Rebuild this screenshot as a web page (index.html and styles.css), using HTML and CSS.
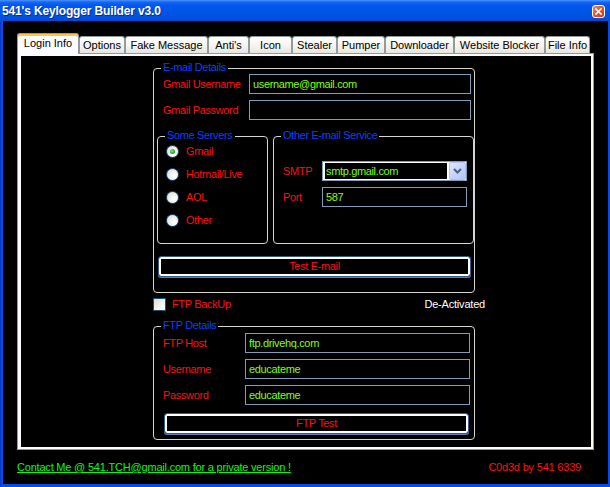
FILE: index.html
```html
<!DOCTYPE html>
<html lang="en">
<head>
<meta charset="utf-8">
<title>541's Keylogger Builder v3.0</title>
<link rel="stylesheet" href="styles.css">
</head>
<body>
<div class="window">
  <header class="titlebar">
    <span class="title">541's Keylogger Builder v3.0</span>
    <span class="close" aria-label="Close">
      <svg width="11" height="11" viewBox="0 0 11 11"><path d="M3 3 L8 8 M8 3 L3 8" stroke="#fff" stroke-width="1.7" stroke-linecap="square"/></svg>
    </span>
  </header>
  <main class="client">
    <nav class="tabs">
      <span class="tab active w-login">Login Info</span>
      <span class="tab w-options">Options</span>
      <span class="tab w-fake">Fake Message</span>
      <span class="tab w-antis">Anti's</span>
      <span class="tab w-icon">Icon</span>
      <span class="tab w-stealer">Stealer</span>
      <span class="tab w-pumper">Pumper</span>
      <span class="tab w-down">Downloader</span>
      <span class="tab w-web">Website Blocker</span>
      <span class="tab w-file">File Info</span>
    </nav>
    <section class="page">
      <div class="page-inner">
        <div class="form">
          <div class="group email">
            <span class="legend">E-mail Details</span>
            <div class="field"><span class="label lbl-email">Gmail Username</span><span class="input wide">username@gmail.com</span></div>
            <div class="field"><span class="label lbl-email">Gmail Password</span><span class="input wide"></span></div>
            <div class="subgroups">
              <div class="group servers">
                <span class="legend">Some Servers</span>
                <div class="radio-row"><span class="radio checked"></span><span class="label">Gmail</span></div>
                <div class="radio-row"><span class="radio"></span><span class="label">Hotmail/Live</span></div>
                <div class="radio-row"><span class="radio"></span><span class="label">AOL</span></div>
                <div class="radio-row"><span class="radio"></span><span class="label">Other</span></div>
              </div>
              <div class="group other">
                <span class="legend">Other E-mail Service</span>
                <div class="field"><span class="label lbl-other">SMTP</span>
                  <span class="combo"><span class="combo-text">smtp.gmail.com</span><span class="combo-btn"><svg width="9" height="6" viewBox="0 0 9 6"><path d="M1 1 L4.5 4.5 L8 1" fill="none" stroke="#4d6185" stroke-width="2"/></svg></span></span>
                </div>
                <div class="field"><span class="label lbl-other">Port</span><span class="input short">587</span></div>
              </div>
            </div>
            <div class="btn test-email">Test E-mail</div>
          </div>
          <div class="backup">
            <span class="check"></span>
            <span class="label">FTP BackUp</span>
            <span class="status">De-Activated</span>
          </div>
          <div class="group ftp">
            <span class="legend">FTP Details</span>
            <div class="field"><span class="label lbl-ftp">FTP Host</span><span class="input ftp-input">ftp.drivehq.com</span></div>
            <div class="field"><span class="label lbl-ftp">Username</span><span class="input ftp-input">educateme</span></div>
            <div class="field"><span class="label lbl-ftp">Password</span><span class="input ftp-input">educateme</span></div>
            <div class="btn ftp-test">FTP Test</div>
          </div>
        </div>
      </div>
    </section>
    <footer class="footer">
      <a class="contact" href="#">Contact Me @ 541.TCH@gmail.com for a private version !</a>
      <span class="credit">C0d3d by 541 6339</span>
    </footer>
  </main>
</div>
</body>
</html>
```

FILE: styles.css
```css
* { box-sizing: border-box; }
html, body { margin: 0; padding: 0; background: #000; }
body {
  width: 610px;
  height: 487px;
  overflow: hidden;
  font-family: "Liberation Sans", Arial, sans-serif;
  font-size: 11px;
}

.window {
  width: 610px;
  height: 487px;
  display: flex;
  flex-direction: column;
  background: #0a4ae6;
  border-left: 1px solid #0838c8;
}

.titlebar {
  height: 21px;
  flex: none;
  display: flex;
  align-items: center;
  padding: 2px 5px 0 2px;
  margin-left: -1px;
  background: linear-gradient(to bottom, #4a95ff 0px, #1a66f5 2px, #0058ee 5px, #0055e6 12px, #0051df 18px, #0048d4 21px);
}
.title {
  flex: 1;
  color: #fff;
  font-weight: bold;
  font-size: 12px;
  letter-spacing: -0.15px;
  line-height: 19px;
  text-shadow: 1px 1px 0 #0a2a9c;
}
.close {
  width: 13px;
  height: 13px;
  border: 1px solid #fff;
  border-radius: 3px;
  background: linear-gradient(135deg, #f08a68 0%, #e2582f 45%, #c63a17 100%);
  display: flex;
  align-items: center;
  justify-content: center;
}
.close svg { display: block; }

.client {
  flex: 1;
  margin: 0 2px 3px 2px;
  background: #000;
  display: flex;
  flex-direction: column;
  padding: 12px 0 0 14px;
}

/* Tabs */
.tabs {
  display: flex;
  align-items: flex-end;
  height: 20px;
  flex: none;
}
.tab {
  height: 17px;
  border: 1px solid #919b9c;
  border-bottom: none;
  border-radius: 3px 3px 0 0;
  background: linear-gradient(to bottom, #ffffff 0%, #f6f5f1 50%, #e6e5df 100%);
  color: #000;
  font-size: 11px;
  line-height: 13px;
  display: flex;
  align-items: center;
  justify-content: center;
  white-space: nowrap;
}
.tab.active {
  height: 21px;
  margin-bottom: -1px;
  position: relative;
  z-index: 1;
  background: #fcfcfe;
  border-top: 1px solid #e68b2c;
  box-shadow: inset 0 2px 0 #ffc83c;
  padding-bottom: 2px;
}
.w-login { width: 62px; }
.w-options { width: 46px; }
.w-fake { width: 83px; }
.w-antis { width: 41px; }
.w-icon { width: 43px; }
.w-stealer { width: 45px; }
.w-pumper { width: 48px; }
.w-down { width: 69px; }
.w-web { width: 91px; }
.w-file { width: 45px; }

/* Page */
.page {
  width: 577px;
  height: 397px;
  flex: none;
  border: 1px solid #919b9c;
  background: #fcfcfe;
  padding: 2px 2px 2px 3px;
}
.page-inner {
  height: 100%;
  background: #000;
  padding: 12px 0 0 132px;
}
.form {
  width: 322px;
  display: flex;
  flex-direction: column;
  letter-spacing: -0.35px;
}

.group {
  position: relative;
  border: 1px solid #d6d6cc;
  border-radius: 4px;
}
.legend {
  position: absolute;
  top: -8px;
  left: 7px;
  padding: 0 2px;
  background: #000;
  color: #0044ff;
  line-height: 13px;
  white-space: nowrap;
}

.label {
  color: #ff1010;
  line-height: 13px;
  white-space: nowrap;
}

.field {
  display: flex;
  align-items: center;
  height: 20px;
  padding-left: 9px;
}
.field + .field { margin-top: 6px; }

.input {
  height: 20px;
  border: 1px solid #7f9db9;
  background: #000;
  color: #80ff00;
  padding-left: 3px;
  line-height: 18px;
  white-space: nowrap;
}

/* E-mail Details */
.email {
  height: 225px;
  padding-top: 5px;
}
.lbl-email { width: 86px; }
.wide { width: 222px; }

.subgroups {
  display: flex;
  gap: 5px;
  margin: 16px 0 0 3px;
  height: 108px;
}
.servers {
  width: 111px;
  padding: 8px 0 0 8px;
}
.radio-row {
  display: flex;
  align-items: center;
  height: 13px;
}
.radio-row + .radio-row { margin-top: 10px; }
.radio {
  width: 13px;
  height: 13px;
  flex: none;
  border-radius: 50%;
  border: 1px solid #1c5180;
  background: radial-gradient(circle at 65% 65%, #ffffff 0%, #f2f2ee 40%, #d4d4cc 100%);
  margin-right: 7px;
  display: flex;
  align-items: center;
  justify-content: center;
}
.radio.checked::after {
  content: "";
  width: 5px;
  height: 5px;
  border-radius: 50%;
  background: radial-gradient(circle at 40% 40%, #8ee88e 0%, #2fb12f 50%, #1a8c1a 100%);
}

.other {
  width: 201px;
  padding-top: 24px;
}
.lbl-other { width: 39px; }
.short { width: 145px; }

.combo {
  width: 145px;
  height: 20px;
  display: flex;
  border: 1px solid #7f9db9;
  background: #fff;
  padding: 0 0 0 1px;
}
.combo-text {
  flex: 1;
  margin: 1px 2px 1px 1px;
  background: #000;
  color: #80ff00;
  line-height: 16px;
  padding-left: 1px;
  white-space: nowrap;
}
.combo-btn {
  width: 17px;
  height: 18px;
  border: 1px solid #b4c6f0;
  border-radius: 2px;
  background: linear-gradient(135deg, #dfe8fd 0%, #c6d5fb 50%, #b3c6f5 100%);
  display: flex;
  align-items: center;
  justify-content: center;
}
.combo-btn svg { display: block; }

.btn {
  height: 21px;
  border: 1px solid #365a8c;
  border-radius: 3px;
  background: #000;
  box-shadow: inset 0 0 0 2px #ffffff, 0 1px 0 #5a7fb6;
  color: #ff1010;
  line-height: 19px;
  text-align: center;
}
.test-email {
  width: 313px;
  margin: 12px 0 0 4px;
}

/* FTP backup row */
.backup {
  display: flex;
  align-items: center;
  height: 13px;
  margin: 5px -10px 0 0;
}
.check {
  width: 13px;
  height: 13px;
  flex: none;
  border: 1px solid #1c5180;
  background: linear-gradient(135deg, #dcdcd5 0%, #f4f4f0 60%, #ffffff 100%);
  margin-right: 6px;
}
.status {
  margin-left: auto;
  color: #ffffff;
  line-height: 13px;
  letter-spacing: -0.2px;
}

/* FTP Details */
.ftp {
  height: 114px;
  margin-top: 15px;
  padding-top: 6px;
}
.lbl-ftp { width: 82px; }
.ftp-input { width: 225px; }
.ftp-test {
  width: 305px;
  margin: 8px 0 0 10px;
}

/* Footer */
.footer {
  width: 564px;
  display: flex;
  justify-content: space-between;
  margin-top: 11px;
  line-height: 13px;
  letter-spacing: -0.2px;
}
.contact {
  color: #00ff00;
  text-decoration: underline;
}
.credit {
  color: #ff1010;
}
```
